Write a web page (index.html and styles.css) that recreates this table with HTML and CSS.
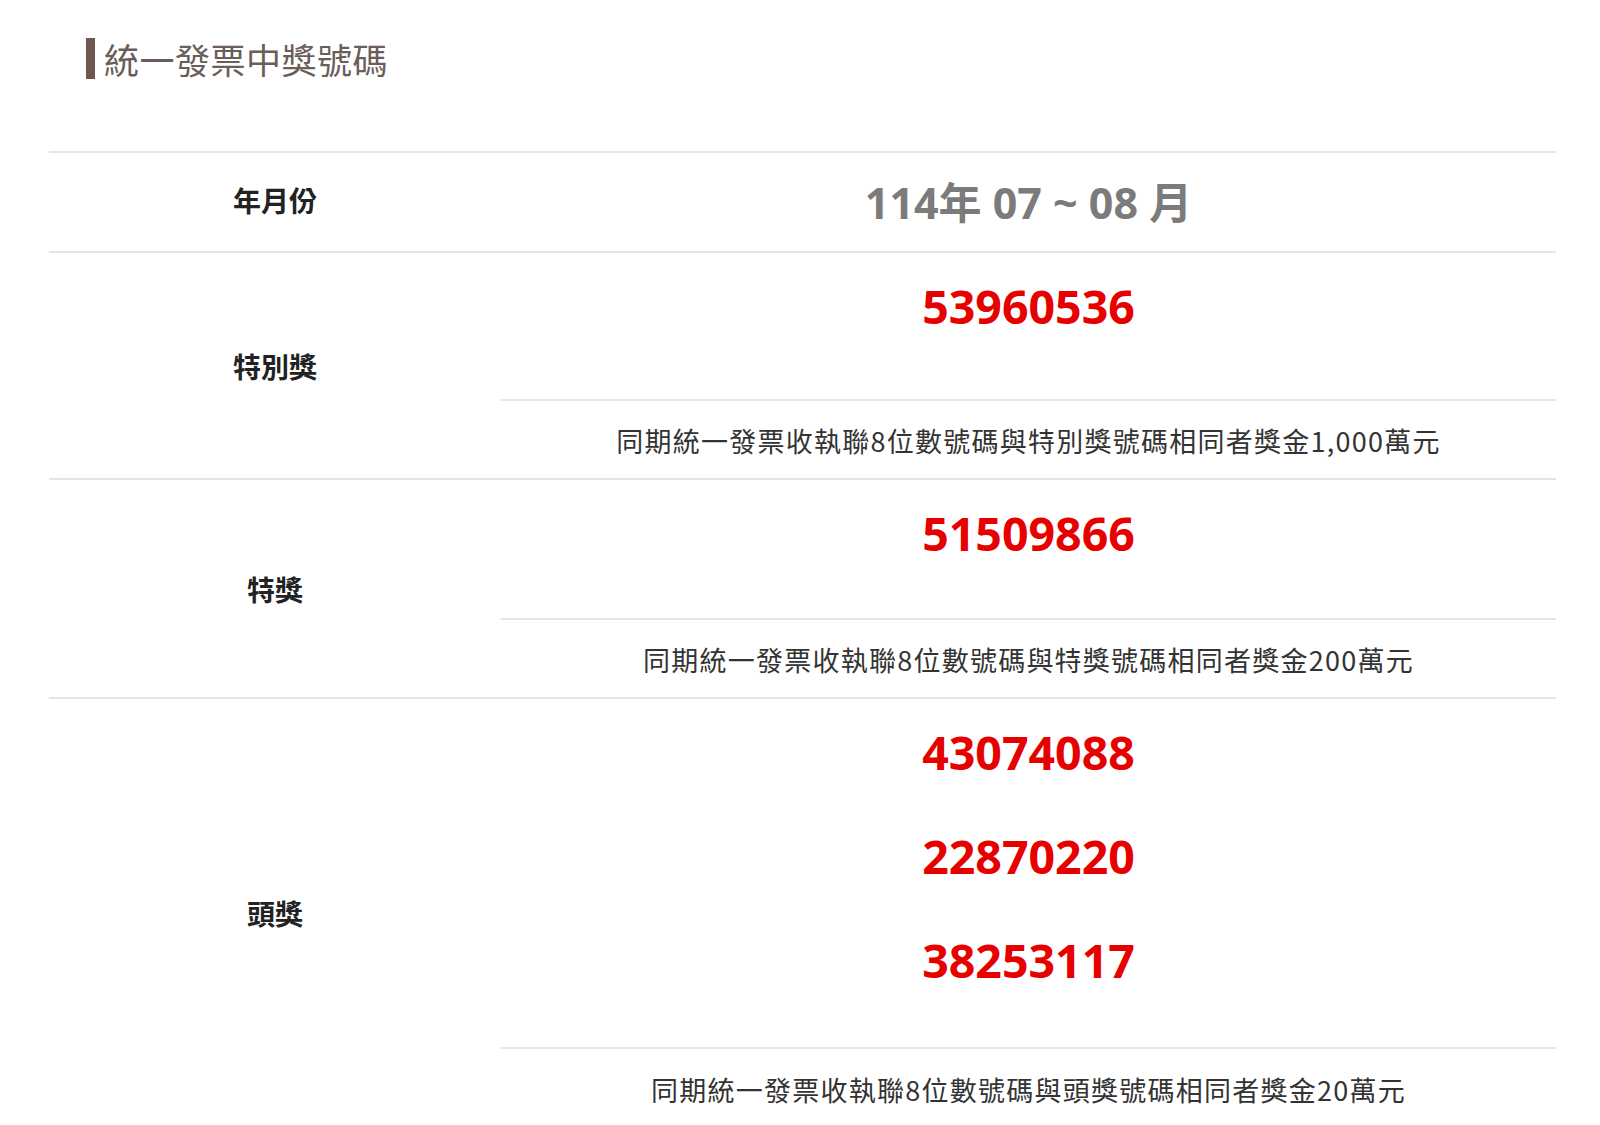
FILE: index.html
```html
<!DOCTYPE html>
<html lang="zh-Hant">
<head>
<meta charset="utf-8">
<title>統一發票中獎號碼</title>
<link rel="stylesheet" href="styles.css">
</head>
<body>
<div class="page">
  <h1 class="title"><span class="title-bar"></span><span class="title-text">統一發票中獎號碼</span></h1>
  <div class="table">
    <div class="label row-head">年月份</div>
    <div class="value row-head"><span class="period">114年 07 ~ 08 月</span></div>

    <div class="label prize-label">特別獎</div>
    <div class="numbers numbers-first"><div class="num">53960536</div></div>
    <div class="desc">同期統一發票收執聯8位數號碼與特別獎號碼相同者獎金1,000萬元</div>

    <div class="label prize-label">特獎</div>
    <div class="numbers"><div class="num">51509866</div></div>
    <div class="desc">同期統一發票收執聯8位數號碼與特獎號碼相同者獎金200萬元</div>

    <div class="label prize-label">頭獎</div>
    <div class="numbers numbers-multi"><div class="num">43074088</div><div class="num">22870220</div><div class="num">38253117</div></div>
    <div class="desc desc-last">同期統一發票收執聯8位數號碼與頭獎號碼相同者獎金20萬元</div>
  </div>
</div>
</body>
</html>
```

FILE: styles.css
```css
html, body {
  margin: 0;
  padding: 0;
  background: #ffffff;
}
body {
  font-family: "Noto Sans CJK TC", "Noto Sans", sans-serif;
  color: #222;
}
.page {
  padding: 38px 44px 0 49px;
}
.title {
  display: flex;
  align-items: center;
  margin: 0 0 72px 0;
  padding-left: 37px;
  height: 41px;
  font-weight: 400;
}
.title-bar {
  width: 9px;
  height: 41px;
  background: #6e5651;
  flex: none;
}
.title-text {
  margin-left: 9px;
  font-size: 35px;
  line-height: 41px;
  color: #6b5d59;
  letter-spacing: 0.5px;
}
.table {
  display: grid;
  grid-template-columns: 452px 1fr;
  border-top: 2px solid #e6e6e0;
}
.label {
  display: flex;
  align-items: center;
  justify-content: center;
  font-size: 28px;
  font-weight: 700;
  color: #222;
  border-bottom: 2px solid #e6e6e0;
}
.row-head {
  height: 94px;
  padding-bottom: 4px;
}
.value {
  display: flex;
  align-items: center;
  justify-content: center;
  border-bottom: 2px solid #e6e6e0;
}
.period {
  font-family: "Open Sans", "Noto Sans CJK TC", sans-serif;
  font-weight: 700;
  font-size: 43px;
  color: #7b7b7b;
}
.prize-label {
  grid-row: span 2;
}
.numbers {
  display: flex;
  flex-direction: column;
  align-items: center;
  gap: 44px;
  padding: 23px 0 55px;
  border-bottom: 2px solid #e6e6e0;
}
.numbers-first {
  padding-bottom: 63px;
}
.numbers-multi {
  padding-bottom: 57px;
}
.num {
  font-family: "Open Sans", "Noto Sans", sans-serif;
  font-weight: 700;
  font-size: 46.5px;
  line-height: 60px;
  height: 60px;
  color: #e60000;
}
.desc {
  text-align: center;
  font-family: "Noto Sans CJK TC", "Noto Sans", sans-serif;
  font-size: 27px;
  letter-spacing: 1.25px;
  line-height: 40px;
  color: #333;
  padding: 20px 0 17px;
  border-bottom: 2px solid #e6e6e0;
}
.desc-last {
  padding: 21px 0 17px;
}
```
